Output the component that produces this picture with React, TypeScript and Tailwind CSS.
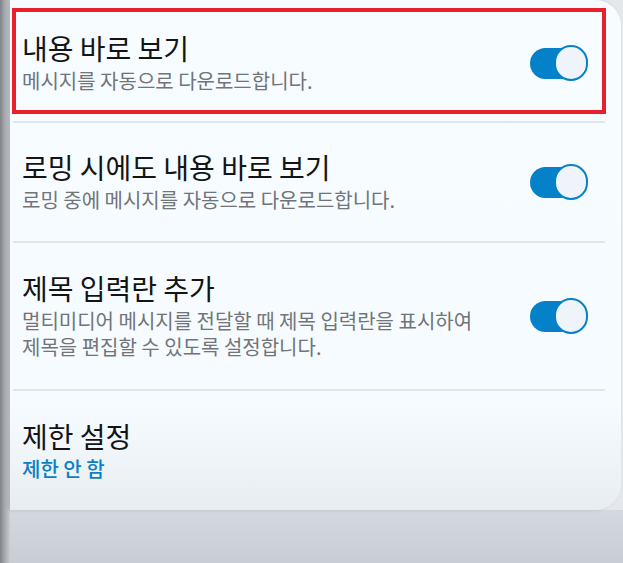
import React from 'react'

const font = { fontFamily: '"Noto Sans CJK KR", "Noto Sans", sans-serif' }

function Toggle() {
  return (
    <div className="relative h-[36px] w-[58px] shrink-0">
      <div className="absolute left-0 top-[3px] h-[31px] w-[46px] rounded-full bg-[#0481c9]" />
      <div className="absolute right-0 top-0 h-[36px] w-[34px] rounded-full border-2 border-[#0481c9] bg-[#eff4fb]" />
    </div>
  )
}

function Divider() {
  return <div className="ml-[3px] mr-[16px] h-[2px] bg-[#dfe5ec]" />
}

type Row = {
  title: string
  lines: string[]
  pad: string
  toggle?: boolean
  link?: boolean
}

const rows: Row[] = [
  { title: '내용 바로 보기', lines: ['메시지를 자동으로 다운로드합니다.'], pad: 'pt-[31px] pb-[27px]', toggle: true },
  { title: '로밍 시에도 내용 바로 보기', lines: ['로밍 중에 메시지를 자동으로 다운로드합니다.'], pad: 'pt-[27px] pb-[28px]', toggle: true },
  {
    title: '제목 입력란 추가',
    lines: ['멀티미디어 메시지를 전달할 때 제목 입력란을 표시하여', '제목을 편집할 수 있도록 설정합니다.'],
    pad: 'pt-[28px] pb-[29px]',
    toggle: true,
  },
  { title: '제한 설정', lines: ['제한 안 함'], pad: 'pt-[28px] pb-[28px]', link: true },
]

export default function App() {
  return (
    <div className="flex h-[563px] w-[623px] overflow-hidden bg-[#e4e8ec]" style={font}>
      <div className="w-[10px] shrink-0 bg-gradient-to-r from-[#7f8388] via-[#a9adb2] to-[#c9cdd2]" />
      <div className="flex flex-1 flex-col">
        <div className="relative w-[611px] rounded-r-[26px] bg-gradient-to-b from-[#f6fcff] via-[#f5fbfe] via-80% to-[#e7edf0] shadow-[-2px_0_4px_rgba(0,0,0,0.12)]">
          {rows.map((row, i) => (
            <React.Fragment key={row.title}>
              {i > 0 && <Divider />}
              <div className={`flex items-center justify-between pl-[12px] pr-[33px] ${row.pad}`}>
                <div>
                  <div className="text-[28px] leading-[34px] text-[#141414]">{row.title}</div>
                  <div
                    className={
                      row.link
                        ? 'mt-[3px] text-[20px] font-medium leading-[26px] text-[#0b7fc4]'
                        : 'mt-[3px] text-[20px] leading-[26px] text-[#717479]'
                    }
                  >
                    {row.lines.map((l) => (
                      <div key={l}>{l}</div>
                    ))}
                  </div>
                </div>
                {row.toggle && <Toggle />}
              </div>
            </React.Fragment>
          ))}
          <div className="pointer-events-none absolute left-[2px] top-[8px] h-[106px] w-[594px] border-4 border-[#e8202a]" />
        </div>
        <div className="flex-1 bg-gradient-to-b from-[#d4d8df] to-[#c9cdd4]" />
      </div>
    </div>
  )
}
